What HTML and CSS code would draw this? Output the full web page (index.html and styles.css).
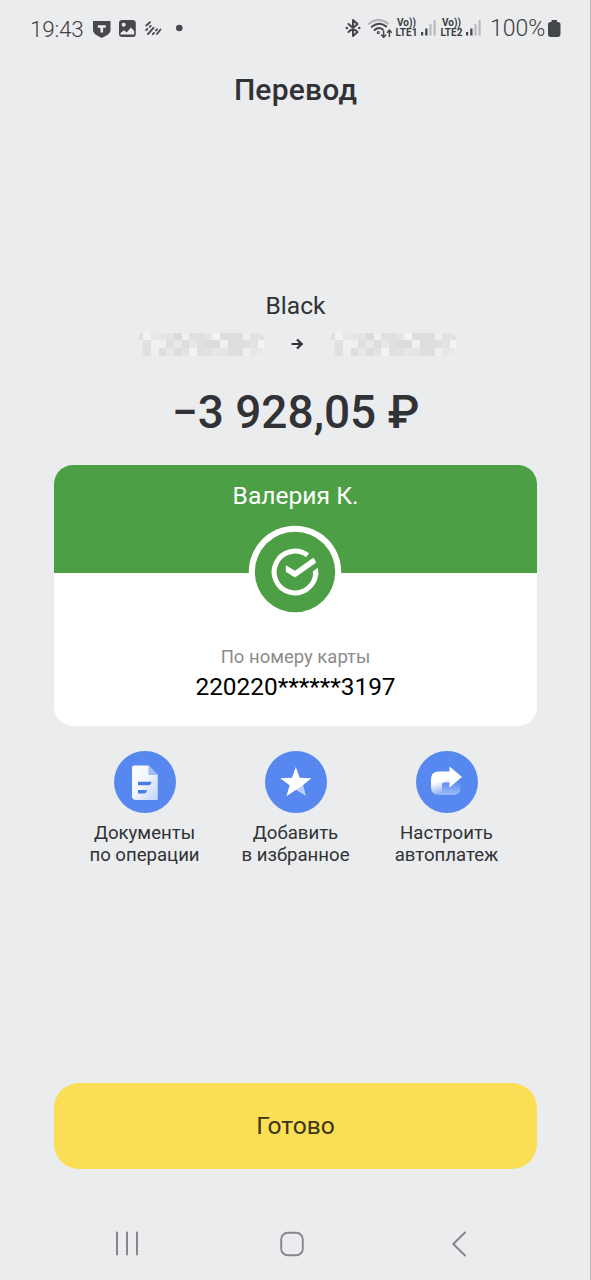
FILE: index.html
```html
<!DOCTYPE html>
<html lang="ru">
<head>
<meta charset="utf-8">
<title>Перевод</title>
<link rel="stylesheet" href="styles.css">
</head>
<body>
<div class="screen">
  <header class="status">
    <span class="clock">19:43</span>
    <svg class="status-left" width="100" height="30" viewBox="88 14 100 30">
      <path d="M93 21h17.500v9.500q0 3.500-8.700 7.500q-8.800-4-8.800-7.500z" fill="#46484c"/>
      <path d="M97.800 25.300h8v2.500h-2.700v4.800h-2.600v-4.800h-2.700z" fill="#ebecee"/>
      <rect x="119" y="20" width="16.800" height="17" rx="3.200" fill="#46484c"/>
      <circle cx="123.700" cy="24.800" r="2" fill="#ebecee"/>
      <path d="M120.500 33l3.500-2.800 2.700 2.300 4.200-5 3.300 3.500v3.500h-13.700z" fill="#ebecee"/>
      <g stroke="#4c4e52" stroke-width="1.900" stroke-linecap="round">
        <path d="M146.300 25.500l3.700-3.300M146.200 30l1.200-1.200M149.800 26.900l1-1M148 34l5.500-6.200M152.800 34.200l1.200-1.400M156 30.500l1-1.200M157 34l3.500-4.500"/>
      </g>
      <circle cx="179.300" cy="28" r="3.300" fill="#46484c"/>
    </svg>
    <svg class="status-mid" width="50" height="30" viewBox="342 14 50 30">
      <g fill="none" stroke="#44464a" stroke-width="2" stroke-linejoin="round" stroke-linecap="round">
        <path d="M348.500 24l9 8-4.500 4V20l4.500 4-9 8"/>
        <path d="M346.800 28h.1M359.200 28h.1" stroke-width="2.400"/>
        <path d="M369 23.800q9.500-7.800 19 0" stroke="#b4b6ba"/>
        <path d="M371.800 26.800q7-5.800 14.300-.5M374.600 30q4-3.600 8-.7" stroke-width="2.100"/>
        <circle cx="378.300" cy="32.500" r=".6"/>
        <path d="M383.600 31v6M381.500 35l2.100 2.200 2.100-2.200M389.400 36.500v-6M387.500 32.300l1.900-2.200 1.900 2.200" stroke-width="1.500"/>
      </g>
    </svg>
    <span class="lte"><b>Vo))</b><b>LTE1</b></span>
    <svg class="bars" width="16" height="16" viewBox="0 0 16 16"><path d="M0 12h2.200v3.500H0zM4.200 8.500h2.300v7H4.200z" fill="#44464a"/><path d="M8.400 4h2.200v11.500H8.400zM12.500 0h2.200v15.500h-2.200z" fill="#b9bbbe"/></svg>
    <span class="lte"><b>Vo))</b><b>LTE2</b></span>
    <svg class="bars" width="16" height="16" viewBox="0 0 16 16"><path d="M0 12h2.200v3.500H0zM4.200 8.500h2.300v7H4.200z" fill="#44464a"/><path d="M8.400 4h2.200v11.500H8.400zM12.500 0h2.200v15.500h-2.200z" fill="#b9bbbe"/></svg>
    <span class="percent">100%</span>
    <svg class="battery" width="13" height="18" viewBox="0 0 13 18"><path d="M3.500 0h5.500v2h1q2.500 0 2.500 2.500v9.500q0 3-3 3h-6.500q-3 0-3-3v-9.500q0-2.500 2.500-2.500h1z" fill="#44464a"/></svg>
  </header>

  <h1 class="title">Перевод</h1>

  <main class="content">
    <div class="account">Black</div>
    <div class="route">
      <svg class="mosaic" width="130" height="26" viewBox="136 331 130 26">
        <defs>
          <g id="cells" shape-rendering="crispEdges">
            <path d="M137 340.300l3-6q1-1.600 4-1.600v7.600z" fill="#dddedf"/>
            <path d="M143.300 340.300h7.700V355.500h-7.700z" fill="#dddedf"/>
            <path d="M143.300 332.700h7.700v7.600h-7.700z" fill="#f3f4f5"/>
            <path d="M151 332.700h15.300v7.600H151z" fill="#e6e7e8"/>
            <path d="M151 340.300h15.300v7.700H151z" fill="#f0f1f1"/>
            <path d="M151 348h7.700v7.500H151z" fill="#eeeff0"/>
            <path d="M158.700 348h7.600v7.500h-7.600z" fill="#dadbdc"/>
            <path d="M166.300 332.700h7.700v7.600h-7.700z" fill="#e2e3e4"/>
            <path d="M166.300 340.300h7.700v7.700h-7.700z" fill="#dcddde"/>
            <path d="M166.300 348h7.700v7.500h-7.700z" fill="#e6e7e8"/>
            <path d="M174 332.700h7.700v7.600H174z" fill="#d5d6d7"/>
            <path d="M174 340.300h7.700v7.700H174z" fill="#e7e8e9"/>
            <path d="M174 348h7.700v7.500H174z" fill="#d9dadb"/>
            <path d="M181.700 332.700h7.600v7.600h-7.600z" fill="#f0f1f1"/>
            <path d="M181.700 340.300h7.600v7.700h-7.600z" fill="#d9dadb"/>
            <path d="M181.700 348h7.600v7.500h-7.600z" fill="#e1e2e3"/>
            <path d="M189.300 332.700h15.400v7.600h-15.400zM197 340.300h7.700V355.500H197z" fill="#dddedf"/>
            <path d="M189.300 340.300h7.700v7.700h-7.700z" fill="#e6e7e8"/>
            <path d="M189.300 348h7.700v7.500h-7.700z" fill="#f4f5f5"/>
            <path d="M204.700 332.700h7.600v7.600h-7.600z" fill="#e5e6e7"/>
            <path d="M204.700 348h7.600v7.500h-7.600z" fill="#dfe0e1"/>
            <path d="M204.700 340.300h15.300v7.700h-15.300z" fill="#d8d9da"/>
            <path d="M212.300 348h15.200v7.500h-15.200z" fill="#e4e5e6"/>
            <path d="M212.300 332.700h7.700v7.600h-7.700z" fill="#f5f6f6"/>
            <path d="M220 332.700h22.700v15.300H220z" fill="#d9dadb"/>
            <path d="M220 340.300h7.500v7.700H220z" fill="#f1f2f2"/>
            <path d="M227.500 348h15.200v7.500h-15.200z" fill="#dadbdc"/>
            <path d="M242.700 332.700h7.600v7.600h-7.600zM242.700 348h7.600v7.500h-7.600z" fill="#eff0f1"/>
            <path d="M242.700 340.300h7.600v7.700h-7.600z" fill="#dcddde"/>
            <path d="M250.300 332.700h8.200l5 4v3.600h-13.200zM250.300 340.300h7.700v7.700h-7.700z" fill="#dfe0e1"/>
            <path d="M258 340.300h6.500l-1 7.700H258z" fill="#f5f6f6"/>
            <path d="M250.300 348h12l-3 6-9 1.500z" fill="#e5e6e7"/>
          </g>
        </defs>
        <use href="#cells"/>
      </svg>
      <svg class="arrow" width="14" height="14" viewBox="0 0 14 14"><path d="M1.500 7h10M7 2.500l4.700 4.500-4.700 4.500" fill="none" stroke="#2d2f32" stroke-width="2.200"/></svg>
      <svg class="mosaic" width="130" height="26" viewBox="136 331 130 26"><use href="#cells"/></svg>
    </div>
    <div class="amount">−3 928,05 ₽</div>

    <section class="card">
      <div class="card-top">Валерия К.</div>
      <div class="card-bottom">
        <div class="method">По номеру карты</div>
        <div class="number">220220******3197</div>
      </div>
      <svg class="bank" width="94" height="94" viewBox="-47 -47 94 94">
        <circle r="46.200" fill="#fff"/>
        <circle r="40.200" fill="#4d9f46"/>
        <path d="M12.550 -16.650A20.850 20.850 0 1 0 20.800 1.400" fill="none" stroke="#fff" stroke-width="5"/>
        <path d="M-9.200-6.800L0-1.200 18.200-14.200Q21-11.500 21-9.300L0 5.400-9.200-.200z" fill="#fff"/>
        <path d="M22.700-4.200L17.800-.500 18.200 3 23.300 3Q23.600-1 22.700-4.200z" fill="#fff"/>
      </svg>
    </section>

    <nav class="actions">
      <div class="action">
        <svg width="62" height="62" viewBox="114 751 62 62">
          <defs><linearGradient id="paper" x1="0" y1="0" x2="1" y2="1"><stop offset="0" stop-color="#fff"/><stop offset=".45" stop-color="#f2f6ff"/><stop offset="1" stop-color="#c1d3fc"/></linearGradient></defs>
          <circle cx="145" cy="782" r="31" fill="#5688f0"/>
          <path d="M134 765.500h14.500l9.300 9.500v25H136q-4 0-4-4v-28.500q0-2 2-2z" fill="url(#paper)"/>
          <path d="M148.500 765.500l9.300 9.500h-9.300z" fill="#9fbcf8"/>
          <path d="M138 781.800h13.500q-.4 3.500-3.300 3.500H138zM138 790h9q-.4 3.500-3.300 3.500H138z" fill="#4b7de8"/>
        </svg>
        <span>Документы<br>по операции</span>
      </div>
      <div class="action">
        <svg width="62" height="62" viewBox="265 751 62 62">
          <circle cx="296" cy="782" r="31" fill="#5688f0"/>
          <path d="M303 784.500l3 11.500-10.500-6.500z" fill="#b9cefb"/>
          <path d="M295.800 767l3.900 10.800 11.700.4-9.200 7.500-15.800 10.600 3.200-11-9.400-7 11.800-.5z" fill="#fff"/>
        </svg>
        <span>Добавить<br>в избранное</span>
      </div>
      <div class="action">
        <svg width="62" height="62" viewBox="416 751 62 62">
          <defs>
            <linearGradient id="turn" x1=".2" y1="0" x2=".45" y2="1"><stop offset=".45" stop-color="#fff"/><stop offset="1" stop-color="#86aaf6"/></linearGradient>
            <linearGradient id="base" x1="0" y1="0" x2="0" y2="1"><stop offset="0" stop-color="#5c8cf1"/><stop offset="1" stop-color="#9dbbf8"/></linearGradient>
          </defs>
          <circle cx="447" cy="782" r="31" fill="#5688f0"/>
          <path d="M442 782h18.500v6q0 7-7 7H442z" fill="url(#base)"/>
          <path d="M438.500 771.500H450v11h-6q-2 0-2 2V795h-3q-8 0-8-8v-7.500q0-8 7.500-8z" fill="url(#turn)"/>
          <path d="M449.500 766.500l12.500 10.500-12.500 10.500z" fill="#fff"/>
        </svg>
        <span>Настроить<br>автоплатеж</span>
      </div>
    </nav>
  </main>

  <button class="done">Готово</button>

  <footer class="system-nav">
    <svg width="24" height="26" viewBox="0 0 24 26"><path d="M2 1.500v22M12 1.500v22M22 1.500v22" stroke="#85878b" stroke-width="2" stroke-linecap="round"/></svg>
    <svg class="home" width="24" height="26" viewBox="0 0 24 26"><rect x="1.200" y="1.800" width="21.600" height="22.400" rx="6.500" fill="none" stroke="#85878b" stroke-width="1.900"/></svg>
    <svg width="16" height="26" viewBox="0 0 16 26"><path d="M14 1.500L2.300 13 14 24.500" fill="none" stroke="#85878b" stroke-width="2" stroke-linecap="round"/></svg>
  </footer>
</div>
</body>
</html>
```
FILE: styles.css
```css
* { box-sizing: border-box; }
body { margin: 0; background: #ebecee; font-family: Roboto, "Liberation Sans", sans-serif; color: #303235; }
svg { display: block; flex: none; }
.screen { width: 591px; height: 1280px; display: flex; flex-direction: column; align-items: center; background: #ebecee; box-shadow: inset -1px 0 #b9babc; overflow: hidden; }

.status { width: 591px; height: 56px; display: flex; align-items: center; padding-left: 30px; flex: none; color: #3c3e42; }
.clock { width: 58px; padding-top: 2px; font-size: 22.500px; line-height: 30px; white-space: nowrap; font-weight: 300; letter-spacing: -.2px; }
.status-left { margin: 2px 154px 0 0; }
.status-mid { margin-top: 2px; }
.lte { width: 23px; margin-left: 3px; display: flex; flex-direction: column; align-items: center; }
.lte b { font-size: 10px; line-height: 10px; height: 10px; font-weight: 700; white-space: nowrap; }
.bars { margin: 0 0 0 3px; }
.percent { width: 58px; padding-top: 2px; margin-left: 8px; font-size: 23px; line-height: 30px; font-weight: 300; }
.battery { margin: 1px 0 0 0; }

.title { margin: 14px 0 0; font-size: 30px; line-height: 40px; font-weight: 500; letter-spacing: .2px; }
.content { width: 483px; display: flex; flex-direction: column; align-items: center; padding-top: 181px; }
.account { font-size: 24.600px; line-height: 30px; }
.route { display: flex; align-items: center; justify-content: center; gap: 24px; height: 26px; margin: 10px 0 0 3px; }
.mosaic { opacity: .8; }
.amount { margin-top: 27px; font-size: 46px; line-height: 56px; font-weight: 500; white-space: nowrap; }

.card { position: relative; width: 483px; height: 261px; margin-top: 25px; border-radius: 19px; overflow: hidden; background: #fff; text-align: center; flex: none; }
.card-top { height: 108px; padding-top: 15px; background: #4d9f46; color: #fff; font-size: 24.600px; line-height: 32px; }
.card-bottom { padding-top: 72px; }
.method { font-size: 18.500px; line-height: 24px; color: #8b8b8b; }
.number { margin-top: 2px; font-size: 24.400px; line-height: 32px; color: #000; }
.bank { position: absolute; left: 194px; top: 60px; }

.actions { display: flex; justify-content: center; margin-top: 25px; }
.action { width: 151px; display: flex; flex-direction: column; align-items: center; gap: 9px; text-align: center; font-size: 18.600px; line-height: 22px; white-space: nowrap; }

.done { width: 483px; height: 86px; margin-top: auto; flex: none; border: 0; border-radius: 25px; background: #f9de56; color: #3d3518; font: 400 24.600px/30px Roboto, "Liberation Sans", sans-serif; }
.system-nav { width: 352px; height: 111px; margin-right: 10px; padding-top: 39px; display: flex; justify-content: space-between; align-items: center; flex: none; }
.home { margin-left: -5px; }
```
